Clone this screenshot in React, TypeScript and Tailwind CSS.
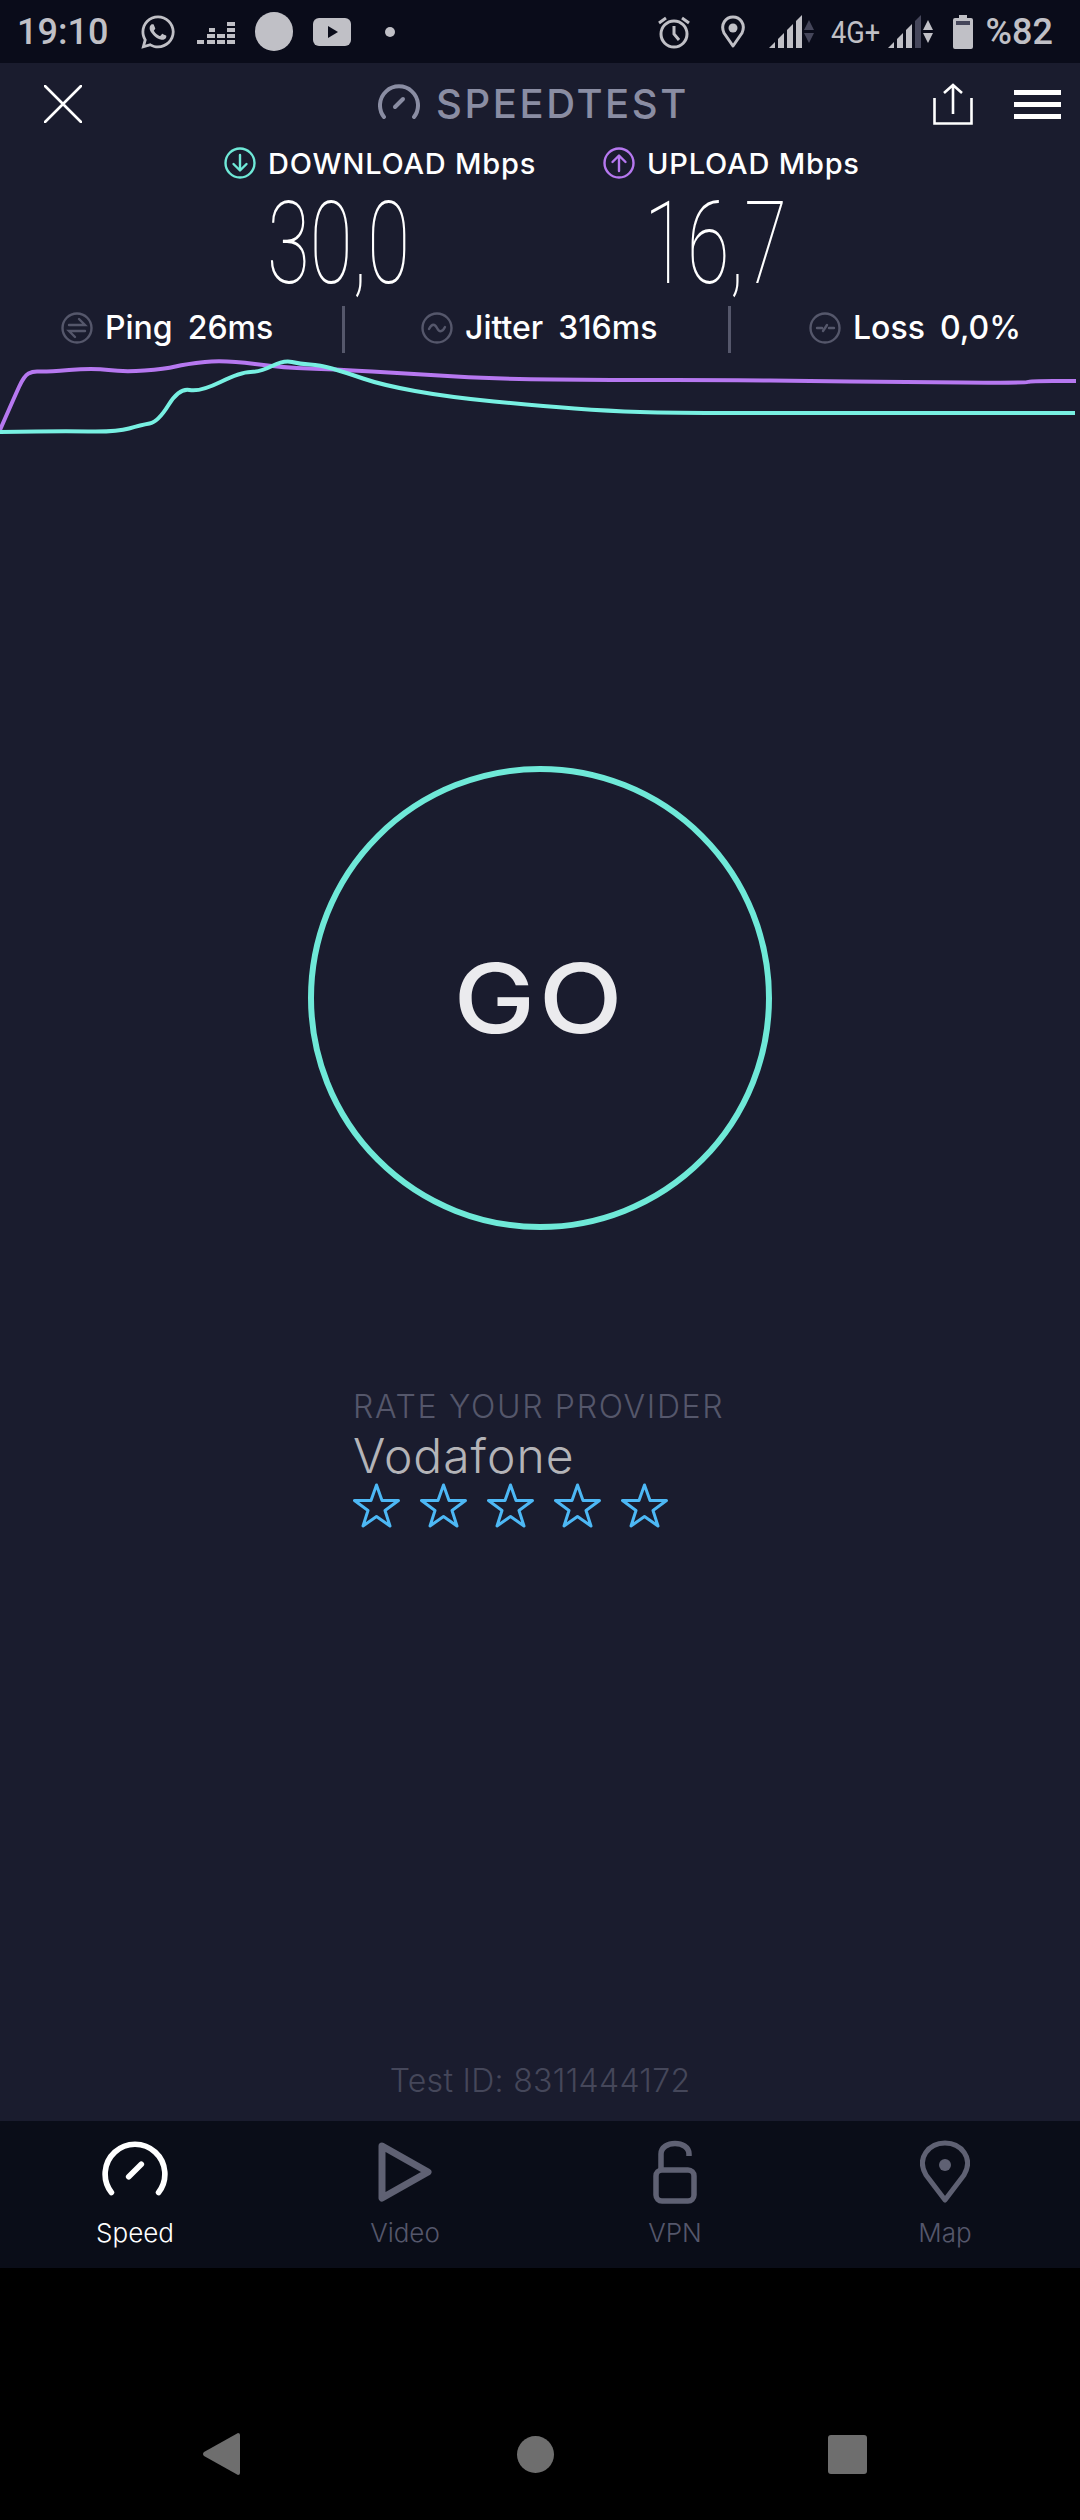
import { FaWhatsapp } from "react-icons/fa";

const purplePts = [[0,430],[14,398],[24,376],[33,371],[45,372],[93,368],[124,372],[165,369],[186,364],[224,360],[286,368],[331,369],[413,374],[499,379],[609,380],[740,380],[800,381],[900,382],[1025,383],[1030,381],[1076,381]];
const cyanPts = [[0,432],[60,431],[117,432],[141,425],[158,422],[179,388],[200,392],[241,372],[260,372],[284,360],[300,364],[320,365],[344,372],[382,385],[448,397],[540,406],[609,411],[671,413],[800,413],[1030,413],[1075,413]];

// rounds the corners of the chart line through the segment midpoints
function smooth(pts: number[][]) {
  let d = `M${pts[0][0]} ${pts[0][1]}`;
  for (let i = 1; i < pts.length - 1; i++) {
    const mx = (pts[i][0] + pts[i + 1][0]) / 2;
    const my = (pts[i][1] + pts[i + 1][1]) / 2;
    d += ` Q${pts[i][0]} ${pts[i][1]} ${mx} ${my}`;
  }
  const last = pts[pts.length - 1];
  return `${d} L${last[0]} ${last[1]}`;
}

function Signal({ dim }: { dim?: boolean }) {
  return (
    <svg width="34" height="33" viewBox="0 0 34 33">
      <path d="M0 33 L6 27 V33 Z" fill="#c0c0c6" />
      <path d="M9 24 L15 18 V33 H9 Z" fill="#c0c0c6" />
      <path d="M18 15 L24 9 V33 H18 Z" fill="#c0c0c6" />
      <path d="M27 6 L33 0 V33 H27 Z" fill={dim ? "#45465a" : "#c0c0c6"} />
    </svg>
  );
}

function StatusBar() {
  return (
    <div className="flex h-[63px] items-center justify-between bg-[#0a0c1a] pl-[17px] pr-[27px] text-[#c0c0c6] font-['Roboto',sans-serif]">
      <div className="flex items-center">
        <span className="w-[91px] text-[36px] font-medium leading-none">19:10</span>
        <FaWhatsapp className="ml-[31px] h-[38px] w-[38px]" />
        <svg className="ml-[20px]" width="38" height="26" viewBox="0 0 38 26" fill="#c0c0c6">
          <rect x="0" y="21" width="7" height="4" />
          <rect x="10" y="21" width="8" height="4" /><rect x="10" y="15" width="8" height="4" /><rect x="12" y="9" width="6" height="4" />
          <rect x="20" y="21" width="8" height="4" /><rect x="20" y="15" width="8" height="4" />
          <rect x="30" y="21" width="8" height="4" /><rect x="30" y="15" width="8" height="4" /><rect x="30" y="9" width="8" height="4" /><rect x="30" y="3" width="8" height="4" />
        </svg>
        <div className="ml-[20px] h-[39px] w-[38px] rounded-full bg-[#c0c0c6]" />
        <svg className="ml-[20px]" width="38" height="28" viewBox="0 0 38 28">
          <rect width="38" height="28" rx="6" fill="#c0c0c6" />
          <path d="M15 8 L25 14 L15 20 Z" fill="#0a0c1a" />
        </svg>
        <div className="ml-[34px] h-[10px] w-[10px] rounded-full bg-[#c0c0c6]" />
      </div>
      <div className="flex items-center">
        <svg width="32" height="34" viewBox="0 0 32 34" fill="none" stroke="#c0c0c6" strokeWidth="3">
          <circle cx="16" cy="19" r="13" />
          <path d="M16 11 V19 L21 25" />
          <path d="M1 8 L8 3 M31 8 L24 3" />
        </svg>
        <svg className="ml-[31px]" width="24" height="33" viewBox="0 0 24 33" fill="none">
          <path d="M12 31 L3 18 C-1 9 5 2 12 2 C19 2 25 9 21 18 Z" stroke="#c0c0c6" strokeWidth="3" strokeLinejoin="round" />
          <circle cx="12" cy="13" r="4.5" fill="#c0c0c6" />
        </svg>
        <div className="ml-[24px]"><Signal /></div>
        <svg className="ml-[1px]" width="10" height="24" viewBox="0 0 10 24" fill="#45465a">
          <path d="M5 0 L10 10 H0 Z M0 13 H10 L5 23 Z" />
        </svg>
        <span className="ml-[17px] w-[51px] origin-left scale-x-[0.85] text-[32px] leading-none">4G+</span>
        <div className="ml-[6px]"><Signal dim /></div>
        <svg className="ml-[1px]" width="10" height="24" viewBox="0 0 10 24" fill="#c0c0c6">
          <path d="M5 0 L10 10 H0 Z M0 13 H10 L5 23 Z" />
        </svg>
        <svg className="ml-[20px]" width="20" height="34" viewBox="0 0 20 34">
          <path d="M6 0 H14 V3 H18 Q20 3 20 5 V32 Q20 34 18 34 H2 Q0 34 0 32 V5 Q0 3 2 3 H6 Z" fill="#c0c0c6" />
          <rect x="3" y="6" width="14" height="4" fill="#45465a" />
        </svg>
        <span className="ml-[13px] text-[36px] font-medium leading-none">%82</span>
      </div>
    </div>
  );
}

function Gauge({ size, color, width }: { size: number; color: string; width: number }) {
  return (
    <svg width={size} height={size} viewBox="0 0 42 42" fill="none" stroke={color} strokeWidth={width} strokeLinecap="round">
      <path d="M6 34 A19 19 0 1 1 36 34" />
      <path d="M17 24 L25 16" />
    </svg>
  );
}

function Header() {
  return (
    <div className="flex h-[82px] items-center">
      <svg className="ml-[44px]" width="38" height="38" viewBox="0 0 38 38" stroke="#ffffff" strokeWidth="2.6" strokeLinecap="round">
        <path d="M1 1 L37 37 M37 1 L1 37" />
      </svg>
      <div className="ml-[296px] flex items-center">
        <Gauge size={42} color="#8a8da3" width={4} />
        <span className="ml-[16px] w-[248px] text-[40px] font-medium leading-none tracking-[2.6px] text-[#8a8da3]">SPEEDTEST</span>
      </div>
      <svg className="ml-[249px]" width="40" height="42" viewBox="0 0 40 42" fill="none" stroke="#ffffff" strokeWidth="2.6">
        <path d="M1.5 15 V40.5 H38.5 V15" />
        <path d="M20 31 V2 M11 10 L20 2 L29 10" />
      </svg>
      <div className="ml-[41px] flex w-[47px] flex-col gap-[7px]">
        <div className="h-[5px] bg-white" />
        <div className="h-[5px] bg-white" />
        <div className="h-[5px] bg-white" />
      </div>
    </div>
  );
}

function SpeedLabel({ up, color, text }: { up?: boolean; color: string; text: string }) {
  return (
    <div className="flex items-center">
      <svg width="32" height="32" viewBox="0 0 32 32" fill="none" stroke={color} strokeWidth="2.4" strokeLinecap="round" strokeLinejoin="round">
        <circle cx="16" cy="16" r="14.5" />
        {up ? <path d="M16 24 V9 M9.5 15 L16 8.5 L22.5 15" /> : <path d="M16 8 V23 M9.5 17 L16 23.5 L22.5 17" />}
      </svg>
      <span className="ml-[12px] text-[29px] font-medium leading-none tracking-[0.8px] text-white">{text}</span>
    </div>
  );
}

function Stat({ kind, label, value }: { kind: string; label: string; value: string }) {
  return (
    <div className="flex items-center">
      <svg width="32" height="32" viewBox="0 0 32 32" fill="none" stroke="#55576b" strokeWidth="2.4" strokeLinecap="round">
        <circle cx="16" cy="16" r="14.5" />
        {kind === "ping" && <path d="M8 13 H24 L18 7 M24 19 H8 L14 25" />}
        {kind === "jitter" && <path d="M8 17 C11 11 14 12 16 16 C18 20 21 21 24 15" />}
        {kind === "loss" && <path d="M8 16 H13 M20 16 H25 M14 19 L18 13" />}
      </svg>
      <span className="ml-[12px] text-[32px] font-medium leading-none text-white">{label}</span>
      <span className="ml-[15px] text-[32px] font-medium leading-none text-white">{value}</span>
    </div>
  );
}

function Tab({ label, active, children }: { label: string; active?: boolean; children: React.ReactNode }) {
  return (
    <div className="flex flex-col items-center">
      <div className="flex h-[72px] items-center">{children}</div>
      <span className={`mt-[12px] text-[26px] font-light leading-none ${active ? "text-white" : "text-[#55576b]"}`}>{label}</span>
    </div>
  );
}

export default function App() {
  return (
    <div className="flex h-[2520px] w-[1080px] flex-col overflow-hidden bg-black font-['Inter',sans-serif]">
      <StatusBar />
      <main className="flex h-[2058px] flex-col bg-[#1a1c2e]">
        <Header />
        <div className="flex h-[36px] items-center">
          <div className="ml-[224px] w-[379px]"><SpeedLabel color="#6fe9d8" text="DOWNLOAD Mbps" /></div>
          <SpeedLabel up color="#b678f0" text="UPLOAD Mbps" />
        </div>
        <div className="flex h-[125px] items-center text-white">
          <div className="ml-[235px] w-[200px] scale-x-[0.68] text-center text-[115px] font-thin leading-none font-['Roboto',sans-serif]">30,0</div>
          <div className="ml-[177px] w-[200px] scale-x-[0.68] text-center text-[115px] font-thin leading-none font-['Roboto',sans-serif]">16,7</div>
        </div>
        <div className="flex h-[47px] items-center">
          <div className="-mt-[3px] w-[342px] pl-[61px]"><Stat kind="ping" label="Ping" value="26ms" /></div>
          <div className="h-[47px] w-[3px] bg-[#55576b]" />
          <div className="-mt-[3px] w-[383px] pl-[76px]"><Stat kind="jitter" label="Jitter" value="316ms" /></div>
          <div className="h-[47px] w-[3px] bg-[#55576b]" />
          <div className="-mt-[3px] pl-[78px]"><Stat kind="loss" label="Loss" value="0,0%" /></div>
        </div>
        <svg className="block h-[85px] w-[1080px]" viewBox="0 353 1080 85" fill="none" strokeWidth="4" strokeLinejoin="round">
          <path d={smooth(purplePts)} stroke="#b678f0" />
          <path d={smooth(cyanPts)} stroke="#78f0e2" />
        </svg>
        <div className="mt-[328px] flex h-[464px] w-[464px] items-center justify-center self-center rounded-full border-[6px] border-[#6fe9d8]">
          <span className="scale-x-[1.14] text-[96px] font-medium leading-none tracking-[3px] text-[#ebebee]">GO</span>
        </div>
        <div className="ml-[353px] mt-[158px] flex flex-col">
          <span className="text-[32px] font-light leading-[38px] tracking-[1.7px] text-[#55576b]">RATE YOUR PROVIDER</span>
          <span className="mt-[5px] text-[48px] font-light leading-[50px] tracking-[1px] text-[#b4b4b8]">Vodafone</span>
          <div className="mt-[2px] flex gap-[20px]">
            {[0, 1, 2, 3, 4].map((i) => (
              <svg key={i} width="47" height="45" viewBox="0 0 47 45" fill="none" stroke="#4db8f5" strokeWidth="3" strokeLinejoin="round">
                <path d="M23.5 2 L29 17.5 H45.5 L32 27.5 L37 43 L23.5 33.5 L10 43 L15 27.5 L1.5 17.5 H18 Z" />
              </svg>
            ))}
          </div>
        </div>
        <div className="mt-auto pb-[24px] text-center text-[32px] font-light leading-none tracking-[0.3px] text-[#45475a]">Test ID: 8311444172</div>
      </main>
      <nav className="grid h-[147px] grid-cols-4 bg-[#0a0d18] pt-[15px]">
        <Tab label="Speed" active>
          <Gauge size={66} color="#ffffff" width={3.6} />
        </Tab>
        <Tab label="Video">
          <svg width="54" height="60" viewBox="0 0 54 60" fill="none" stroke="#5f6173" strokeWidth="7" strokeLinejoin="round">
            <path d="M4 4 L50 30 L4 56 Z" />
          </svg>
        </Tab>
        <Tab label="VPN">
          <svg width="44" height="64" viewBox="0 0 44 64" fill="none" stroke="#5f6173" strokeWidth="5.5">
            <rect x="3" y="30" width="38" height="31" rx="6" />
            <path d="M8 29 V14 C8 0 36 0 36 14 V16" />
          </svg>
        </Tab>
        <Tab label="Map">
          <svg width="50" height="64" viewBox="0 0 50 64" fill="none">
            <path d="M25 60 L6 35 C-4 18 9 3 25 3 C41 3 54 18 44 35 Z" stroke="#5f6173" strokeWidth="5" strokeLinejoin="round" />
            <circle cx="25" cy="25" r="6" fill="#5f6173" />
          </svg>
        </Tab>
      </nav>
      <div className="flex flex-1 items-center pt-[120px]">
        <svg className="ml-[203px]" width="37" height="42" viewBox="0 0 37 42" fill="#6e6e6e">
          <path d="M35 0 Q37 0 37 2 V40 Q37 42 35 42 L1 23 Q-1 21 1 19 Z" />
        </svg>
        <div className="ml-[277px] h-[37px] w-[37px] rounded-full bg-[#6e6e6e]" />
        <div className="ml-[274px] h-[39px] w-[39px] rounded-[3px] bg-[#6e6e6e]" />
      </div>
    </div>
  );
}
